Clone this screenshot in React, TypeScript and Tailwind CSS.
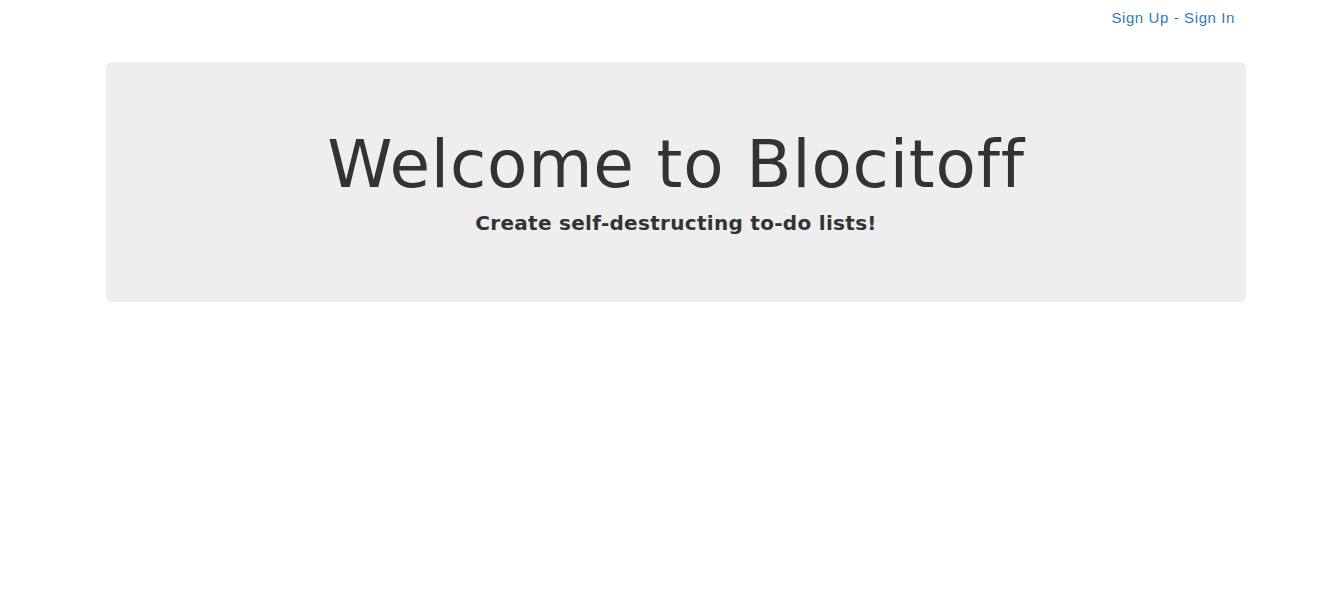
export default function App() {
  return (
    <div className="min-h-[590px] w-full bg-white">
      <div className="flex w-[1140px] ml-[106px] justify-end pt-[9px] pr-[11px]">
        <span className="font-['Liberation_Sans',sans-serif] text-[15px] leading-[18px] tracking-[0.6px] text-[#337ab7]">
          <a href="#">Sign Up</a> - <a href="#">Sign In</a>
        </span>
      </div>
      <div className="ml-[106px] mt-[35px] flex h-[240px] w-[1140px] flex-col items-center rounded-[6px] bg-[#eeeeee] pt-[65px] font-['DejaVu_Sans',sans-serif] text-[#333333]">
        <h1 className="text-[66px] leading-[76px] tracking-[0.8px]">Welcome to Blocitoff</h1>
        <p className="mt-[8px] text-[20px] leading-[24px] font-semibold tracking-[0.3px]">Create self-destructing to-do lists!</p>
      </div>
    </div>
  )
}
